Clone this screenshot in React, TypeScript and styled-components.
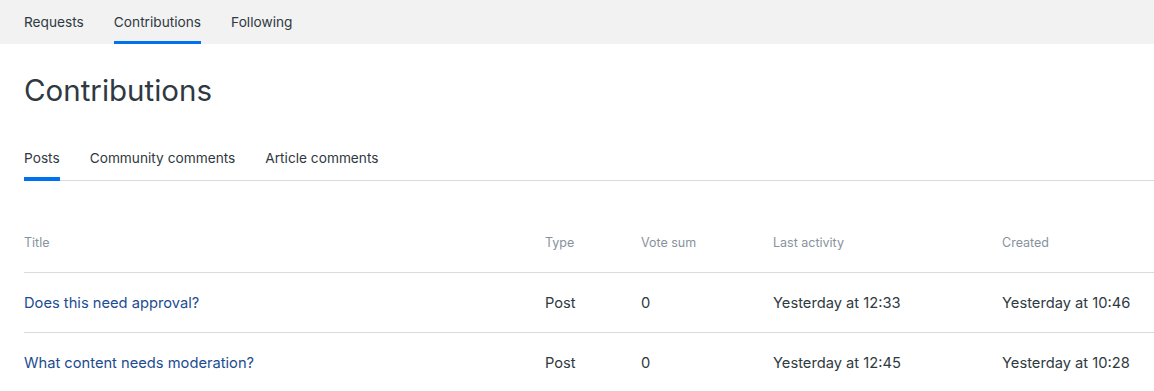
import React from "react";
import styled, { createGlobalStyle } from "styled-components";

const Global = createGlobalStyle`
  html, body { margin: 0; padding: 0; background: #fff; }
  body { font-family: Inter, "Liberation Sans", Arial, sans-serif; color: #2f3941; overflow: hidden; }
  * { box-sizing: border-box; }
`;

const TopNav = styled.nav`
  display: flex;
  gap: 30px;
  height: 44px;
  padding: 0 24px;
  background: #f2f2f2;
`;

const TopNavItem = styled.a<{ $active?: boolean }>`
  display: flex;
  align-items: center;
  padding-top: 3px;
  font-size: 13.7px;
  color: #2f3941;
  text-decoration: none;
  border-bottom: 3px solid ${(p) => (p.$active ? "#0072ef" : "transparent")};
`;

const Main = styled.main`
  padding-left: 24px;
`;

const Heading = styled.h1`
  margin: 28px 0 0;
  font-size: 29.5px;
  font-weight: 400;
  line-height: 36px;
  color: #2f3941;
`;

const TabRow = styled.div`
  display: flex;
  gap: 30px;
  margin-top: 40px;
  border-bottom: 1px solid #d8dcde;
`;

const Tab = styled.a<{ $active?: boolean }>`
  display: block;
  padding-bottom: 9px;
  margin-bottom: -1px;
  font-size: 13.7px;
  line-height: 20px;
  color: #2f3941;
  text-decoration: none;
  border-bottom: 4px solid ${(p) => (p.$active ? "#0072ef" : "transparent")};
`;

const Table = styled.div`
  margin-top: 32px;
`;

const Row = styled.div<{ $head?: boolean }>`
  display: grid;
  grid-template-columns: 521px 96px 132px 229px 1fr;
  align-items: center;
  height: 60px;
  border-bottom: 1px solid #d8dcde;
  font-size: ${(p) => (p.$head ? "12.5px" : "14.7px")};
  color: ${(p) => (p.$head ? "#87929d" : "#2f3941")};
`;

const Cell = styled.div`
  white-space: nowrap;
`;

const TitleLink = styled.a`
  color: #1c4c91;
  text-decoration: none;
`;

const rows = [
  { title: "Does this need approval?", type: "Post", votes: "0", last: "Yesterday at 12:33", created: "Yesterday at 10:46" },
  { title: "What content needs moderation?", type: "Post", votes: "0", last: "Yesterday at 12:45", created: "Yesterday at 10:28" },
];

export default function App() {
  return (
    <>
      <Global />
      <TopNav>
        <TopNavItem href="#">Requests</TopNavItem>
        <TopNavItem href="#" $active>Contributions</TopNavItem>
        <TopNavItem href="#">Following</TopNavItem>
      </TopNav>
      <Main>
        <Heading>Contributions</Heading>
        <TabRow>
          <Tab href="#" $active>Posts</Tab>
          <Tab href="#">Community comments</Tab>
          <Tab href="#">Article comments</Tab>
        </TabRow>
        <Table>
          <Row $head>
            <Cell>Title</Cell>
            <Cell>Type</Cell>
            <Cell>Vote sum</Cell>
            <Cell>Last activity</Cell>
            <Cell>Created</Cell>
          </Row>
          {rows.map((r) => (
            <Row key={r.title}>
              <Cell><TitleLink href="#">{r.title}</TitleLink></Cell>
              <Cell>{r.type}</Cell>
              <Cell>{r.votes}</Cell>
              <Cell>{r.last}</Cell>
              <Cell>{r.created}</Cell>
            </Row>
          ))}
        </Table>
      </Main>
    </>
  );
}
